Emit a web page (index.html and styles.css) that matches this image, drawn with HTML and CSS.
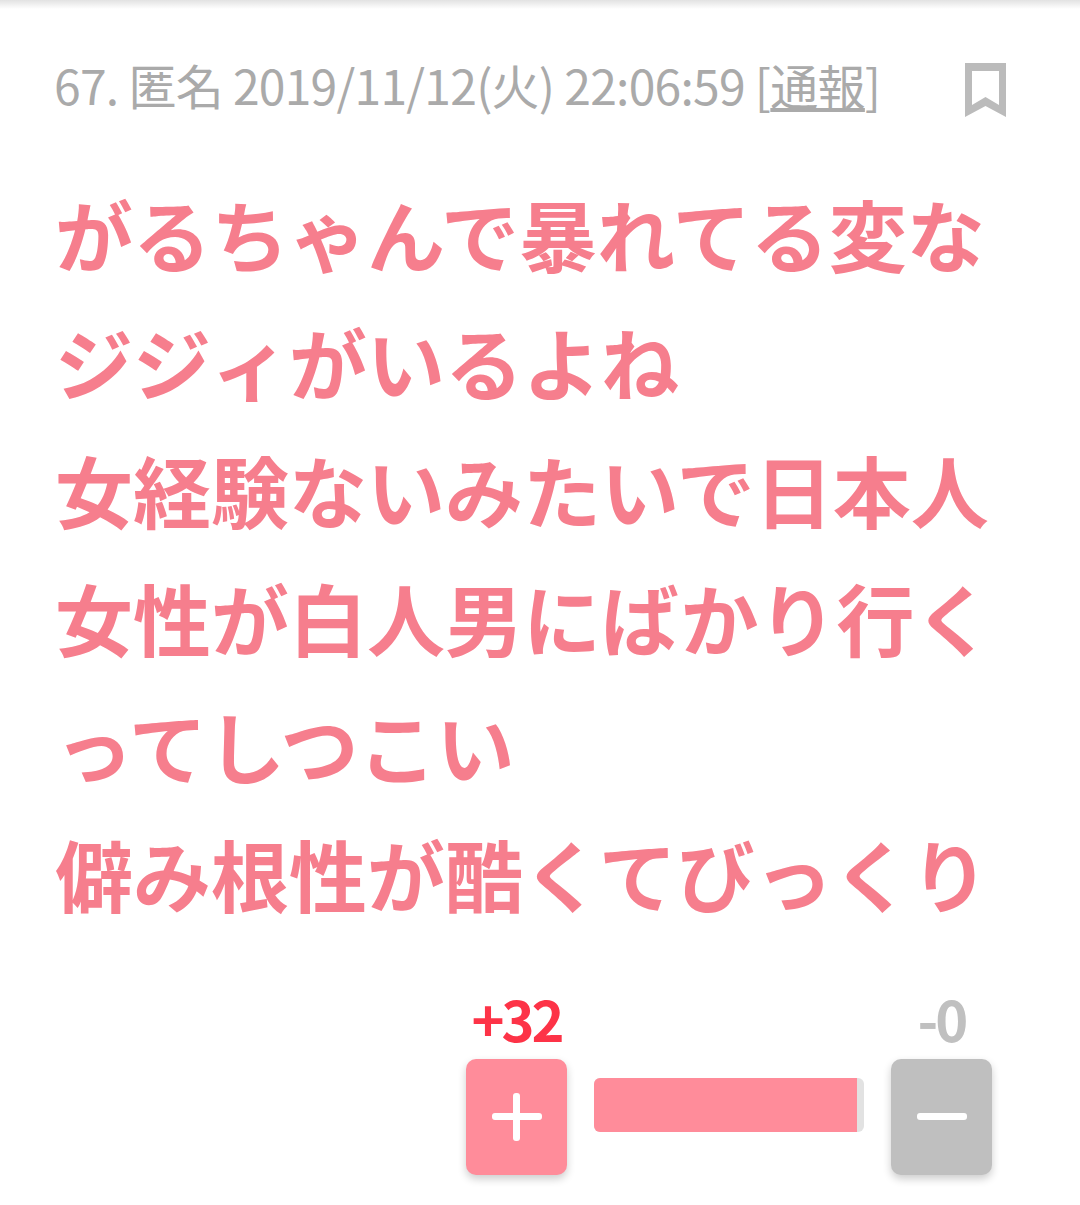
FILE: index.html
```html
<!DOCTYPE html>
<html lang="ja">
<head>
  <meta charset="UTF-8">
  <title>67</title>
  <link rel="stylesheet" href="styles.css">
</head>
<body>
  <div class="comment">
    <div class="comment-head">
      <div class="comment-info">67. 匿名 2019/11/12(火) 22:06:59 [<a href="#" class="report">通報</a>]</div>
      <svg class="bookmark" width="41" height="54" viewBox="0 0 41 54"><path d="M0 0H41V54L20.500 43L0 54ZM7 8V42L20.500 34L34 42V8Z" fill="#bbbbbb" fill-rule="evenodd"/></svg>
    </div>
    <div class="comment-body">がるちゃんで暴れてる変な<br>ジジィがいるよね<br>女経験ないみたいで日本人<br>女性が白人男にばかり行く<br>ってしつこい<br>僻み根性が酷くてびっくり</div>
    <div class="votes">
      <div class="vote">
        <div class="vote-count plus">+32</div>
        <div class="vote-btn btn-plus"><span class="bar-h"></span><span class="bar-v"></span></div>
      </div>
      <div class="meter"><div class="meter-fill" style="width: 97.500%"></div></div>
      <div class="vote">
        <div class="vote-count minus">-0</div>
        <div class="vote-btn btn-minus"><span class="bar-h"></span></div>
      </div>
    </div>
  </div>
</body>
</html>
```

FILE: styles.css
```css
* {
  box-sizing: border-box;
  margin: 0;
  padding: 0;
}

body {
  font-family: "Noto Sans CJK JP", "Noto Sans", sans-serif;
  background: #fff;
  height: 1205px;
  overflow: hidden;
}

.comment {
  background: linear-gradient(to bottom, #e2e2e2, #fff 9px);
  padding: 53px 74px 0 55px;
}

.comment-head {
  display: flex;
  justify-content: space-between;
  align-items: flex-start;
  height: 66px;
}

.comment-info {
  font-size: 48px;
  line-height: 68px;
  letter-spacing: -0.75px;
  color: #aaa;
  white-space: nowrap;
  margin: -3px 0 0 -1px;
}

.report {
  color: #aaa;
}

.bookmark {
  display: block;
  margin-top: 10px;
}

.comment-body {
  margin-top: 50px;
  font-size: 78px;
  line-height: 128px;
  font-weight: 700;
  color: #f67e8d;
  white-space: nowrap;
}

.votes {
  display: flex;
  justify-content: flex-end;
  align-items: flex-end;
  margin-top: 40px;
  margin-right: 14px;
}

.vote {
  width: 101px;
  display: flex;
  flex-direction: column;
  align-items: center;
}

.vote-count {
  font-size: 56px;
  line-height: 82px;
  font-weight: 700;
  letter-spacing: -3px;
}

.plus {
  color: #fd3347;
}

.minus {
  color: #c0c0c0;
}

.vote-btn {
  position: relative;
  width: 101px;
  height: 116px;
  border-radius: 10px;
  box-shadow: 0 4px 8px rgba(0, 0, 0, 0.2);
}

.btn-plus {
  background: #ff8c9a;
}

.btn-minus {
  background: #bfbfbf;
}

.bar-h,
.bar-v {
  position: absolute;
  background: #fff;
  border-radius: 3px;
}

.bar-h {
  left: 26px;
  top: 54px;
  width: 50px;
  height: 7px;
}

.bar-v {
  left: 47px;
  top: 34px;
  width: 7px;
  height: 48px;
}

.meter {
  width: 270px;
  height: 54px;
  margin: 0 27px 43px;
  border-radius: 6px;
  background: #e2e2e2;
  overflow: hidden;
}

.meter-fill {
  height: 100%;
  background: #ff8c9a;
}
```
